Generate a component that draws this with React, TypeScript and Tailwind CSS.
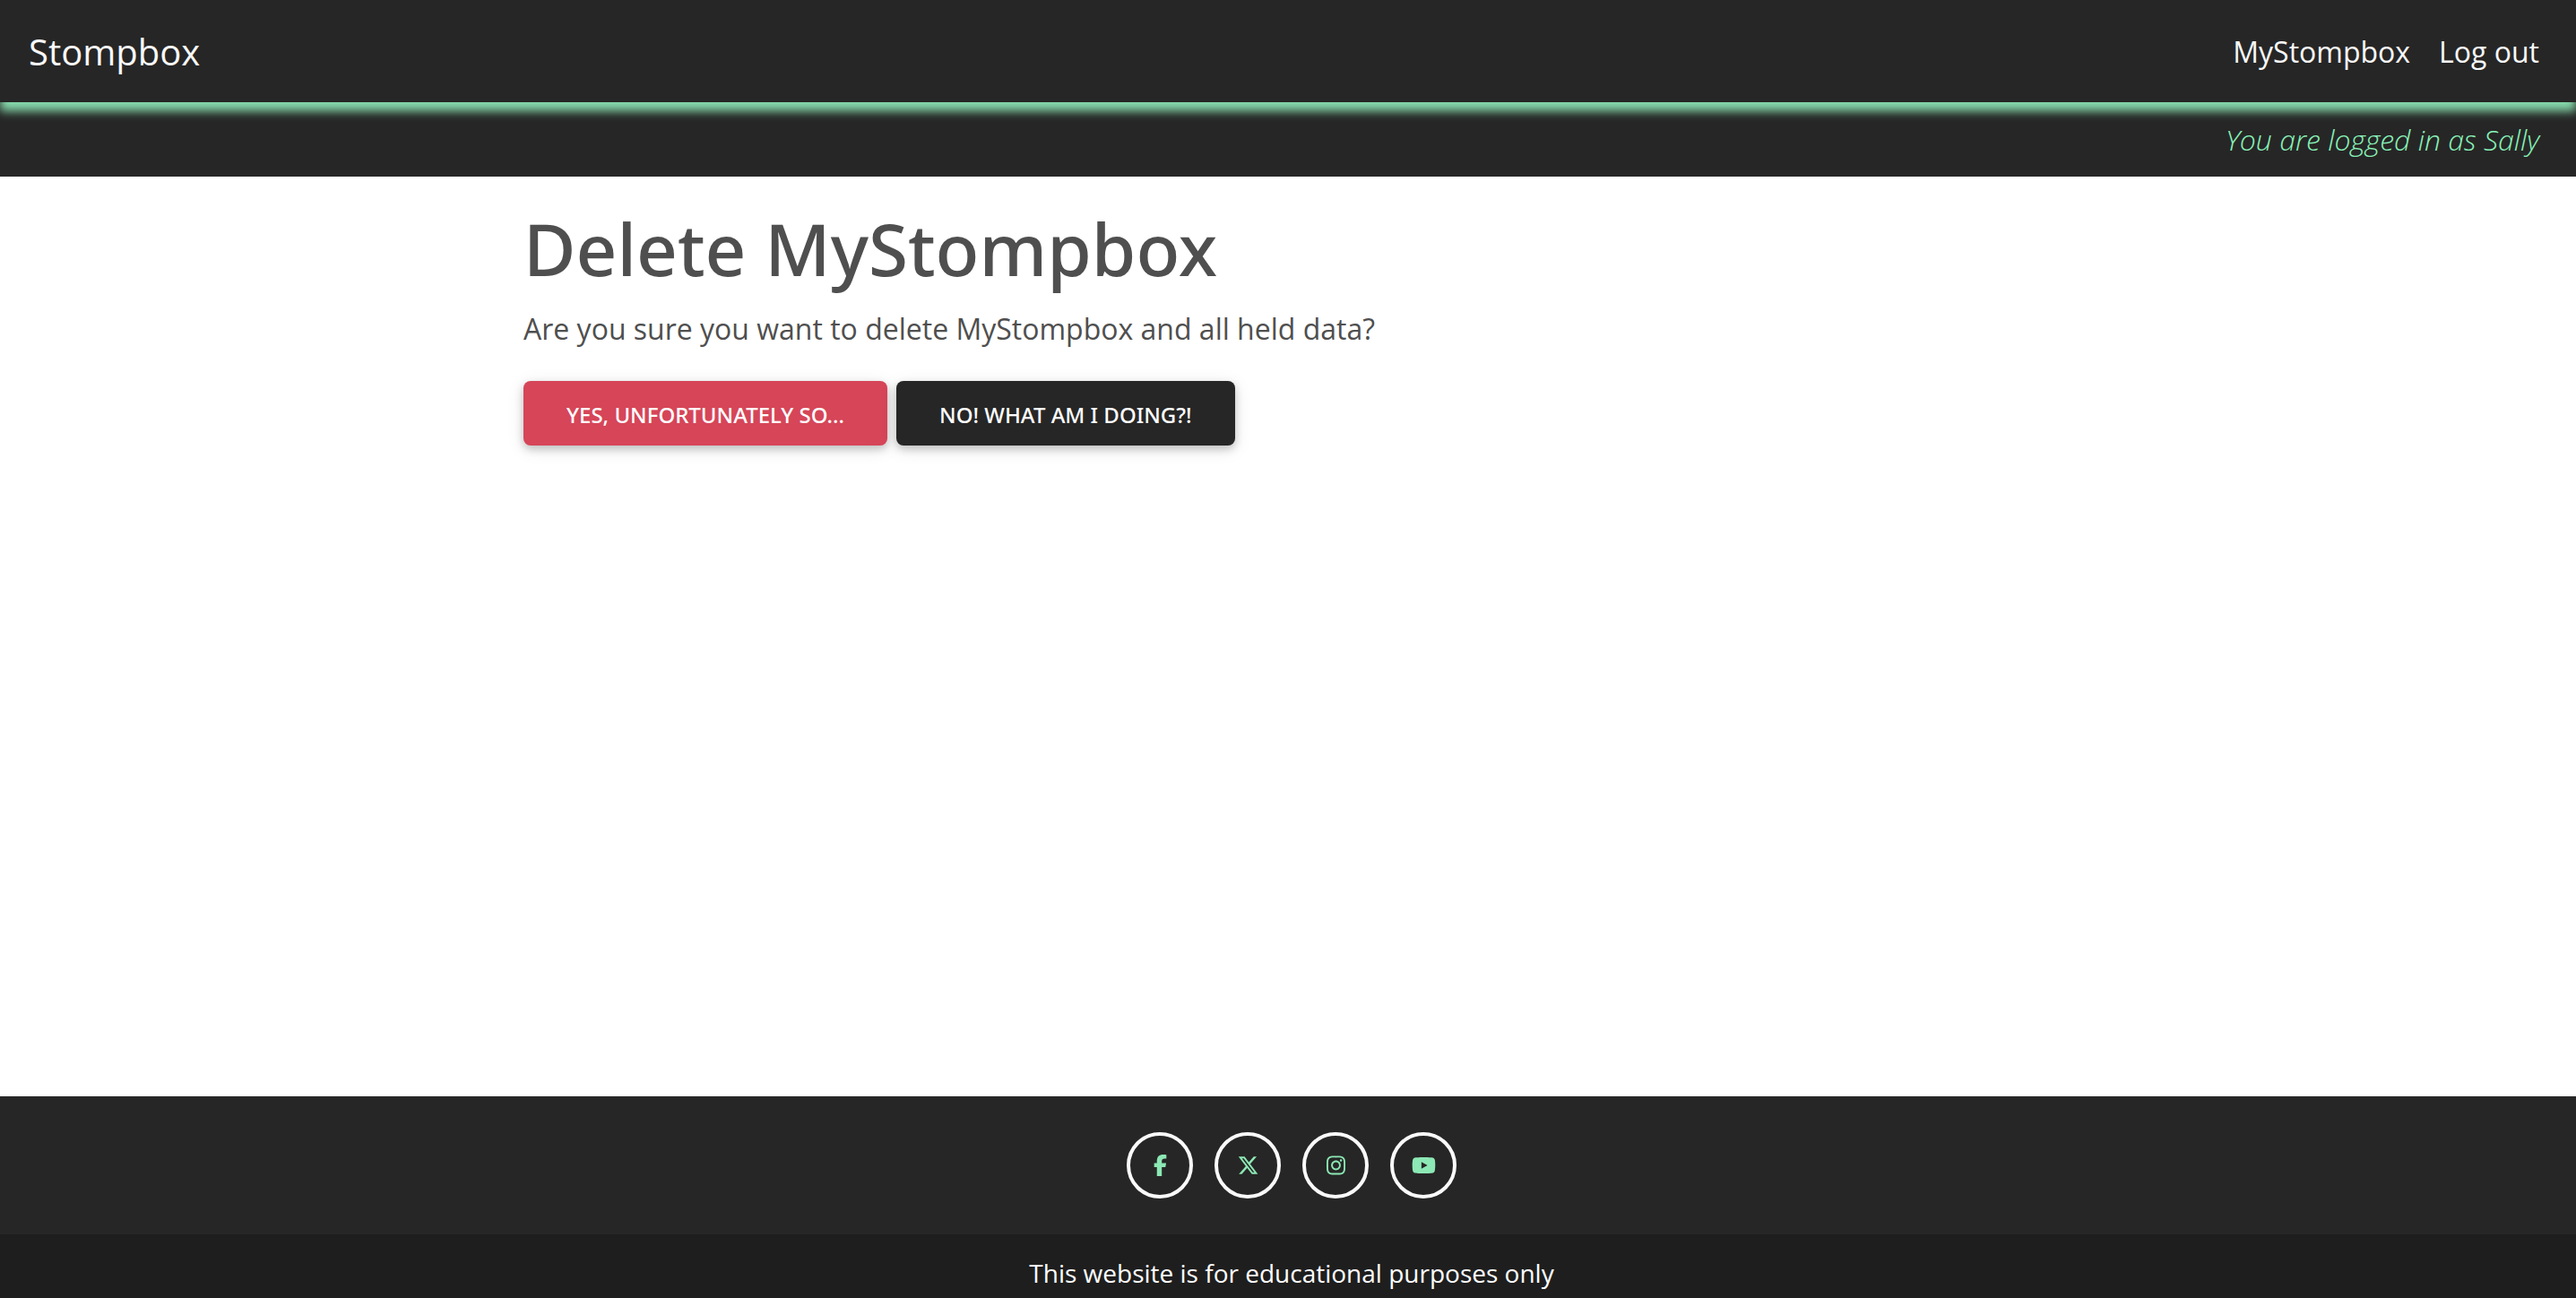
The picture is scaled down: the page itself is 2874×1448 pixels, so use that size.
import React from "react";
import { FaFacebookF, FaInstagram, FaXTwitter, FaYoutube } from "react-icons/fa6";

const socialLinks = [
  { label: "Facebook", Icon: FaFacebookF },
  { label: "X", Icon: FaXTwitter },
  { label: "Instagram", Icon: FaInstagram },
  { label: "YouTube", Icon: FaYoutube },
];

const buttonClass =
  "h-[72px] rounded-lg px-12 pt-1 font-['Noto_Sans',sans-serif] text-[24px] leading-9 font-medium uppercase text-white shadow-[0_4px_10px_rgba(0,0,0,0.2),0_4px_20px_rgba(0,0,0,0.1)]";

export default function App() {
  return (
    <div className="flex min-h-screen flex-col bg-white font-['Open_Sans',sans-serif] text-[32px] leading-[52px] text-[#4f4f4f]">
      <header className="bg-[#262626]">
        <nav className="relative flex h-[114px] items-center justify-between bg-[#262626] pt-px pr-[41px] pl-8 text-[#f8f8f8] shadow-[0_10px_10px_#86daac]">
          <a href="#" className="text-[40px] leading-[60px]">
            Stompbox
          </a>
          <div className="flex gap-8">
            <a href="#">MyStompbox</a>
            <a href="#">Log out</a>
          </div>
        </nav>
        <p className="pt-4 pr-[41px] pb-[15px] pl-8 text-right font-light text-[#88f2b8] italic">
          You are logged in as Sally
        </p>
      </header>

      <main className="mx-auto w-full max-w-[1706px] grow pt-8">
        <h1 className="font-['Noto_Sans',sans-serif] text-[80px] leading-[96px] font-medium">
          Delete MyStompbox
        </h1>
        <p className="pt-4">Are you sure you want to delete MyStompbox and all held data?</p>
        <div className="flex gap-2.5 pt-8">
          <button type="button" className={`${buttonClass} bg-[#d64558]`}>
            Yes, unfortunately so...
          </button>
          <button type="button" className={`${buttonClass} bg-[#262626]`}>
            No! What am I doing?!
          </button>
        </div>
      </main>

      <footer className="bg-[#262626] text-white">
        <div className="flex justify-center gap-6 py-10 pl-2">
          {socialLinks.map(({ label, Icon }) => (
            <a
              key={label}
              href="#"
              aria-label={label}
              className="flex size-[74px] items-center justify-center rounded-full border-4 border-[#fafafa] text-[#8ce8b4]"
            >
              <Icon className="h-6 w-[27px]" />
            </a>
          ))}
        </div>
        <p className="h-[71px] bg-[#1e1e1e] pt-[17px] pl-2 text-center text-[28px]">
          This website is for educational purposes only
        </p>
      </footer>
    </div>
  );
}
